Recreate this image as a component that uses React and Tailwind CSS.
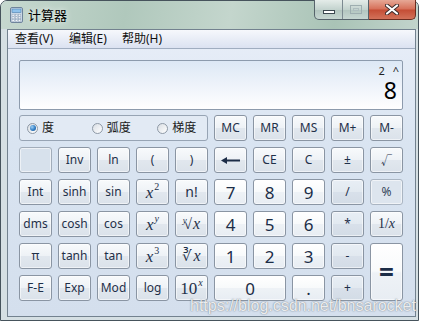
import React from "react";

const serif = "font-['Liberation_Serif',serif]";

function Key({ kind = "fn", span = "", children }) {
  const look = {
    fn: "border-[#8a95a3] bg-[linear-gradient(#f8fafc_0%,#eef2f6_48%,#e1e7ee_52%,#dbe2ea_100%)] text-[12px] text-[#1f3049]",
    num: "border-[#8a95a3] bg-[linear-gradient(#ffffff_0%,#f8fafb_48%,#eef2f6_52%,#e8edf3_100%)] text-[17px] text-[#1c2d47]",
    op: "border-[#8a95a3] bg-[linear-gradient(#e8eef5_0%,#e2e9f0_48%,#d8e0ea_52%,#d3dce6_100%)] text-[12px] text-[#1f3049]",
    blank: "border-[#a2adba] bg-[#d7e1ec]",
    off: "border-[#aab5c2] bg-[#dde5ee] text-[12px] text-[#33445a]",
  }[kind];
  return (
    <div
      className={`flex items-center justify-center rounded-[3px] border leading-none shadow-[inset_0_0_0_1px_rgba(255,255,255,0.55)] ${look} ${span}`}
    >
      {children}
    </div>
  );
}

// x with a small raised index, e.g. x², 10ˣ
function Pow({ base, exp, italicBase = true, italicExp = false }) {
  return (
    <span className={`${serif} flex items-start leading-none`}>
      <span className={`text-[17px] ${italicBase ? "italic" : ""}`}>{base}</span>
      <span className={`ml-[1px] -mt-[2px] text-[10px] ${italicExp ? "italic" : ""}`}>{exp}</span>
    </span>
  );
}

function Radio({ label, checked, width }) {
  return (
    <div className={`flex items-center gap-[4px] ${width}`}>
      <span className="flex h-[11px] w-[11px] items-center justify-center rounded-full border border-[#8e99a6] bg-gradient-to-br from-[#d9dee4] to-white">
        {checked && (
          <span className="h-[6px] w-[6px] rounded-full bg-[radial-gradient(circle_at_35%_35%,#9fd0f5_0%,#2f7cc4_55%,#1b4f8a_100%)]" />
        )}
      </span>
      <span className="text-[12px] leading-none text-[#1a1a1a]">{label}</span>
    </div>
  );
}

function CalcIcon() {
  return (
    <svg width="13" height="16" viewBox="0 0 13 16">
      <rect x="0.5" y="0.5" width="12" height="15" rx="1.5" fill="#c9d7e6" stroke="#6f849b" />
      <rect x="2" y="2" width="9" height="3.5" fill="#8fc2ec" stroke="#4c7fb0" strokeWidth="0.6" />
      {[0, 1, 2].map((r) =>
        [0, 1, 2].map((c) => (
          <rect key={`${r}${c}`} x={2 + c * 3.2} y={7.2 + r * 2.7} width="2.4" height="1.9" fill="#f3f6fa" stroke="#8196ad" strokeWidth="0.4" />
        ))
      )}
    </svg>
  );
}

export default function App() {
  return (
    <div className="relative h-[323px] w-[424px] overflow-hidden bg-white font-['Noto_Sans','Noto_Sans_CJK_SC',sans-serif]">
      <div className="flex h-[321px] w-[419px] flex-col rounded-t-[7px] border border-[#46535c] bg-[#d5dfe3]">
        {/* title bar */}
        <div className="flex h-[28px] shrink-0 items-start rounded-t-[6px] bg-[linear-gradient(100deg,#c6d8cf_0%,#b0c8bc_30%,#c4d6cd_55%,#a9c3b6_80%,#c2d4cc_100%)]">
          <div className="flex items-center pl-[9px] pt-[6px]">
            <CalcIcon />
            <span className="ml-[5px] text-[13px] leading-[16px] text-black [text-shadow:0_0_6px_rgba(255,255,255,0.9)]">计算器</span>
          </div>
          <div className="-mt-[1px] ml-auto mr-[2px] flex h-[20px]">
            <div className="flex w-[55px] overflow-hidden rounded-bl-[5px] border border-t-0 border-[#56636b] bg-[linear-gradient(#e4ece9,#c3d3ce_50%,#b2c5bf_51%,#c6d6d1)]">
              <div className="flex w-[28px] items-end justify-center border-r border-[#7c8a91] pb-[5px]">
                <span className="h-[4px] w-[12px] border border-[#3c4850] bg-white" />
              </div>
              <div className="flex flex-1 items-start justify-center pt-[5px]">
                <span className="flex h-[9px] w-[12px] items-center justify-center border border-[#9eaeb0]">
                  <span className="h-[3px] w-[6px] border border-[#aebdbf]" />
                </span>
              </div>
            </div>
            <div className="flex w-[47px] items-center justify-center rounded-br-[5px] border border-t-0 border-l-0 border-[#6b2c20] bg-[linear-gradient(#e6a896,#d66f58_48%,#c44d35_52%,#d2725a)]">
              <svg width="14" height="11" viewBox="0 0 14 11">
                <path d="M2 1.5 L12 9.5 M12 1.5 L2 9.5" stroke="#3a2a2a" strokeWidth="4" strokeLinecap="round" />
                <path d="M2 1.5 L12 9.5 M12 1.5 L2 9.5" stroke="#ffffff" strokeWidth="2.2" strokeLinecap="round" />
              </svg>
            </div>
          </div>
        </div>

        {/* client area */}
        <div className="mb-[3px] ml-[6px] mr-[2px] flex flex-1 flex-col border border-[#73828f] bg-[linear-gradient(#e8eef8,#d9e4f1_40%,#d4dfed)]">
          {/* menu bar */}
          <div className="flex h-[19px] shrink-0 items-center border-b border-[#a0adc0] bg-gradient-to-b from-[#f6f8fc] to-[#dbe2f1] pl-[7px] text-[12px] leading-none text-[#111]">
            <span className="w-[54px]">查看(V)</span>
            <span className="w-[53px]">编辑(E)</span>
            <span>帮助(H)</span>
          </div>

          <div className="pl-[11px] pr-[12px] pt-[11px]">
            {/* display */}
            <div className="flex h-[50px] flex-col items-end rounded-[2px] border border-[#8d9bad] bg-gradient-to-b from-[#dde8f5] via-[#eef3fa] to-white pr-[3px]">
              <div className="mt-[4px] flex gap-[8px] text-[11px] leading-[11px] text-[#222]">
                <span>2</span>
                <span>^</span>
              </div>
              <div className="mr-[2px] mt-[3px] text-[23px] leading-[22px] text-black">8</div>
            </div>

            {/* keypad */}
            <div className="mt-[5px] grid grid-cols-[repeat(10,33px)] grid-rows-[repeat(6,26px)] gap-[6px]">
              <div className="col-span-5 flex items-center rounded-[3px] border border-[#97a4b4] bg-[#e2eaf4] pl-[7px]">
                <Radio label="度" checked width="w-[65px]" />
                <Radio label="弧度" width="w-[66px]" />
                <Radio label="梯度" width="w-[50px]" />
              </div>
              <Key>MC</Key>
              <Key>MR</Key>
              <Key>MS</Key>
              <Key>M+</Key>
              <Key>M-</Key>

              <Key kind="blank" />
              <Key>Inv</Key>
              <Key>ln</Key>
              <Key>(</Key>
              <Key>)</Key>
              <Key>
                <svg width="19" height="7" viewBox="0 0 19 7">
                  <path d="M5 3.5 H19" stroke="#1c2d47" strokeWidth="2" />
                  <path d="M0 3.5 L6 0 V7 Z" fill="#1c2d47" />
                </svg>
              </Key>
              <Key>CE</Key>
              <Key>C</Key>
              <Key>±</Key>
              <Key>
                <span className="text-[11px]">√</span>
              </Key>

              <Key>Int</Key>
              <Key>sinh</Key>
              <Key>sin</Key>
              <Key>
                <Pow base="x" exp="2" />
              </Key>
              <Key>
                <span className="text-[14px]">n!</span>
              </Key>
              <Key kind="num">7</Key>
              <Key kind="num">8</Key>
              <Key kind="num">9</Key>
              <Key kind="op">/</Key>
              <Key kind="off">%</Key>

              <Key>dms</Key>
              <Key>cosh</Key>
              <Key>cos</Key>
              <Key>
                <Pow base="x" exp="y" italicExp />
              </Key>
              <Key>
                <span className={`${serif} flex items-start leading-none`}>
                  <span className="-mr-[3px] -mt-[1px] text-[9px] italic">y</span>
                  <span className="text-[15px]">√</span>
                </span>
                <span className={`${serif} ml-[1px] text-[16px] italic leading-none`}>x</span>
              </Key>
              <Key kind="num">4</Key>
              <Key kind="num">5</Key>
              <Key kind="num">6</Key>
              <Key kind="op">*</Key>
              <Key>
                <span className={`${serif} text-[14px]`}>1/</span>
                <span className={`${serif} text-[14px] italic`}>x</span>
              </Key>

              <Key>π</Key>
              <Key>tanh</Key>
              <Key>tan</Key>
              <Key>
                <Pow base="x" exp="3" />
              </Key>
              <Key>
                <span className={`${serif} text-[15px] leading-none`}>∛</span>
                <span className={`${serif} ml-[1px] text-[16px] italic leading-none`}>x</span>
              </Key>
              <Key kind="num">1</Key>
              <Key kind="num">2</Key>
              <Key kind="num">3</Key>
              <Key kind="op">-</Key>
              <Key kind="num" span="row-span-2">
                <span className="text-[26px] font-bold text-[#1c2d47]">=</span>
              </Key>

              <Key>F-E</Key>
              <Key>Exp</Key>
              <Key>Mod</Key>
              <Key>log</Key>
              <Key>
                <Pow base="10" exp="x" italicBase={false} italicExp />
              </Key>
              <Key kind="num" span="col-span-2">0</Key>
              <Key kind="num">.</Key>
              <Key kind="op">+</Key>
            </div>
          </div>
        </div>
      </div>

      {/* watermark */}
      <div className="pointer-events-none absolute left-[190px] top-[294px] font-['Liberation_Sans',sans-serif] text-[16px] text-white/85 [text-shadow:0_0_1px_rgba(90,100,110,0.8),0_0_2px_rgba(90,100,110,0.4)]">
        https://blog.csdn.net/bnsarocket
      </div>
    </div>
  );
}
